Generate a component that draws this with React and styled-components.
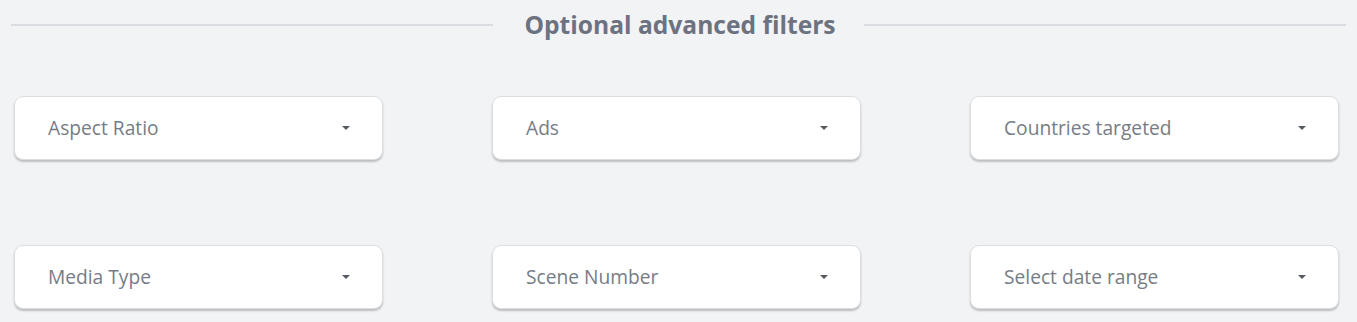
import React from 'react';
import styled, { createGlobalStyle } from 'styled-components';

const GlobalStyle = createGlobalStyle`
  html, body {
    margin: 0;
    padding: 0;
    background: #f2f3f5;
    font-family: 'Open Sans', 'Liberation Sans', sans-serif;
  }
`;

const Page = styled.div`
  width: 1357px;
  height: 322px;
  overflow: hidden;
  background: #f2f3f5;
`;

const Divider = styled.div`
  display: flex;
  align-items: center;
  padding: 10px 11px 0 11px;
  height: 30px;

  &::before,
  &::after {
    content: '';
    flex: 1;
    height: 2px;
    background: #d8dbdf;
  }

  h2 {
    margin: 0;
    padding: 0 28px 0 31px;
    font-size: 24.6px;
    font-weight: 700;
    color: #6c727f;
    white-space: nowrap;
    line-height: 30px;
  }
`;

const FilterGrid = styled.div`
  display: grid;
  grid-template-columns: repeat(3, 369px);
  column-gap: 109px;
  row-gap: 85px;
  padding: 56px 0 0 14px;
`;

const Select = styled.button`
  display: flex;
  align-items: center;
  justify-content: space-between;
  height: 64px;
  box-sizing: border-box;
  padding: 0 32px 1px 33px;
  background: #fff;
  border: 1.5px solid #dcdee1;
  border-radius: 9px;
  box-shadow: 0 2px 2px rgba(0, 0, 0, 0.22);
  font-family: inherit;
  font-size: 19.2px;
  color: #767c86;
  text-align: left;
  cursor: pointer;
`;

const Caret = styled.span`
  width: 0;
  height: 0;
  border-left: 4px solid transparent;
  border-right: 4px solid transparent;
  border-top: 4.5px solid #555a61;
`;

const filters = [
  'Aspect Ratio',
  'Ads',
  'Countries targeted',
  'Media Type',
  'Scene Number',
  'Select date range',
];

export default function App() {
  return (
    <Page>
      <GlobalStyle />
      <Divider>
        <h2>Optional advanced filters</h2>
      </Divider>
      <FilterGrid>
        {filters.map((label) => (
          <Select key={label}>
            <span>{label}</span>
            <Caret />
          </Select>
        ))}
      </FilterGrid>
    </Page>
  );
}
